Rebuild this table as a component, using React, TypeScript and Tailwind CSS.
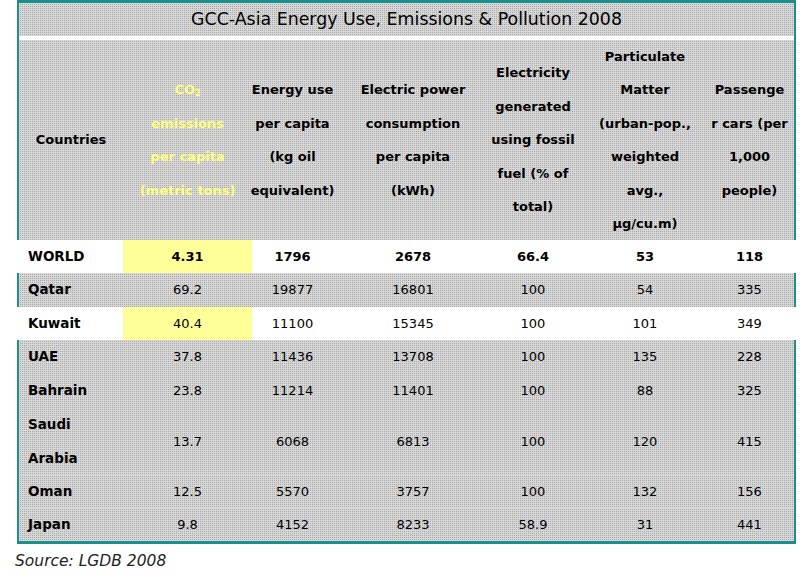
const FONT = "font-['DejaVu_Sans',_'Liberation_Sans',_sans-serif]";
const DITHER =
  'bg-[#a6a6a6] bg-[image:linear-gradient(90deg,#d8d8d8_1px,transparent_1px),linear-gradient(#d8d8d8_1px,transparent_1px)] [background-size:2px_2px]';

const COLS = ['w-[104px]', 'w-[129px]', 'w-[81px]', 'w-[160px]', 'w-[80px]', 'w-[144px]', 'w-[77px]'];

type Row = {
  name: string[];
  values: string[];
  white?: boolean;
  bold?: boolean;
  height: string;
};

const rows: Row[] = [
  { name: ['WORLD'], values: ['4.31', '1796', '2678', '66.4', '53', '118'], white: true, bold: true, height: 'h-[33px]' },
  { name: ['Qatar'], values: ['69.2', '19877', '16801', '100', '54', '335'], height: 'h-[34px]' },
  { name: ['Kuwait'], values: ['40.4', '11100', '15345', '100', '101', '349'], white: true, height: 'h-[33px]' },
  { name: ['UAE'], values: ['37.8', '11436', '13708', '100', '135', '228'], height: 'h-[34px]' },
  { name: ['Bahrain'], values: ['23.8', '11214', '11401', '100', '88', '325'], height: 'h-[34px]' },
  { name: ['Saudi', 'Arabia'], values: ['13.7', '6068', '6813', '100', '120', '415'], height: 'h-[67px]' },
  { name: ['Oman'], values: ['12.5', '5570', '3757', '100', '132', '156'], height: 'h-[33px]' },
  { name: ['Japan'], values: ['9.8', '4152', '8233', '58.9', '31', '441'], height: 'h-[33px]' },
];

const headers: string[][] = [
  ['Energy use', 'per capita', '(kg oil', 'equivalent)'],
  ['Electric power', 'consumption', 'per capita', '(kWh)'],
  ['Electricity', 'generated', 'using fossil', 'fuel (% of', 'total)'],
  ['Particulate', 'Matter', '(urban-pop.,', 'weighted', 'avg.,', 'μg/cu.m)'],
  ['Passenge', 'r cars (per', '1,000', 'people)'],
];

function Lines({ lines }: { lines: string[] }) {
  return (
    <div className="flex flex-col items-center">
      {lines.map((l) => (
        <span key={l} className="whitespace-nowrap leading-[33.5px]">
          {l}
        </span>
      ))}
    </div>
  );
}

export default function App() {
  return (
    <div className={`h-[576px] w-[812px] bg-white text-black ${FONT}`}>
      <div className="ml-[17px] w-[779px]">
        <div className="h-[3px] bg-[#1a8f8c]" />
        <div
          className={`flex h-[33px] items-center justify-center border-x-2 border-[#1a8f8c] text-[17.4px] ${DITHER}`}
        >
          GCC-Asia Energy Use, Emissions &amp; Pollution 2008
        </div>
        <div className="h-[4px] border-x-2 border-[#1a8f8c] bg-white" />
        <div className={`flex h-[200px] border-x-2 border-[#1a8f8c] text-[13px] font-bold ${DITHER}`}>
          <div className={`${COLS[0]} flex items-center justify-center`}>Countries</div>
          <div className={`${COLS[1]} flex items-center justify-center text-[#ffff80]`}>
            <div className="flex flex-col items-center">
              <span className="leading-[33.5px]">
                CO<sub className="text-[8px]">2</sub>
              </span>
              <span className="leading-[33.5px]">emissions</span>
              <span className="leading-[33.5px]">per capita</span>
              <span className="whitespace-nowrap leading-[33.5px]">(metric tons)</span>
            </div>
          </div>
          {headers.map((h, i) => (
            <div
              key={i}
              className={`${COLS[i + 2]} flex items-center justify-center ${i === 4 ? 'pr-[12px]' : ''}`}
            >
              <Lines lines={h} />
            </div>
          ))}
        </div>
        {rows.map((r) => (
          <div
            key={r.name.join(' ')}
            className={`flex ${r.height} border-x-2 text-[13px] ${
              r.white ? 'border-white bg-white' : `border-[#1a8f8c] ${DITHER}`
            }`}
          >
            <div className={`${COLS[0]} flex flex-col justify-center pl-[9px] text-[13.5px] font-bold`}>
              {r.name.map((n) => (
                <span key={n} className="leading-[33.5px]">
                  {n}
                </span>
              ))}
            </div>
            {r.values.map((v, i) => (
              <div
                key={i}
                className={`${COLS[i + 1]} flex items-center justify-center ${r.bold ? 'font-bold' : ''} ${
                  i === 0 && r.white ? 'bg-[#ffff99]' : ''
                } ${i === 5 ? 'pr-[12px]' : ''}`}
              >
                {v}
              </div>
            ))}
          </div>
        ))}
        <div className="h-[3px] bg-[#1a8f8c]" />
      </div>
      <div className="ml-[15px] mt-[7px] text-[15.5px] italic leading-[20px] text-[#222]">Source: LGDB 2008</div>
    </div>
  );
}
